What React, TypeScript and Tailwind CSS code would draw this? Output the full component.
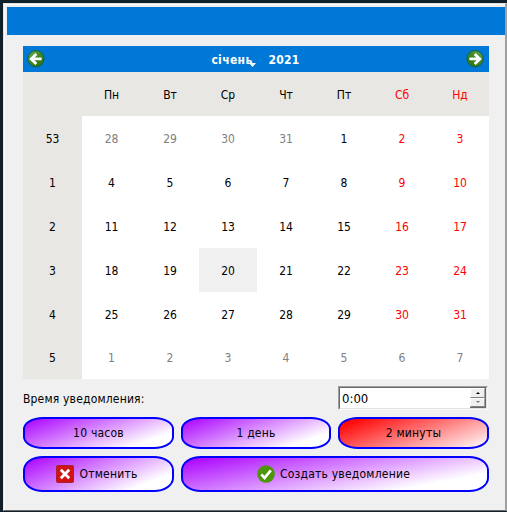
import type { ReactNode } from "react";

const days = ["Пн", "Вт", "Ср", "Чт", "Пт", "Сб", "Нд"];
const weeks = [
  { week: 53, dates: [28, 29, 30, 31, 1, 2, 3] },
  { week: 1, dates: [4, 5, 6, 7, 8, 9, 10] },
  { week: 2, dates: [11, 12, 13, 14, 15, 16, 17] },
  { week: 3, dates: [18, 19, 20, 21, 22, 23, 24] },
  { week: 4, dates: [25, 26, 27, 28, 29, 30, 31] },
  { week: 5, dates: [1, 2, 3, 4, 5, 6, 7] },
];

function dateColor(row: number, col: number, date: number) {
  if ((row === 0 && date > 20) || row === 5) return "text-[#808080]";
  return col > 4 ? "text-[#ff0000]" : "text-black";
}

function NavArrow({ flip = false }: { flip?: boolean }) {
  return (
    <svg width="18" height="18" viewBox="0 0 18 18" className={flip ? "-scale-x-100" : ""}>
      <defs>
        <linearGradient id={flip ? "navNext" : "navPrev"} x1="0" y1="0" x2="0.7" y2="1">
          <stop offset="0" stopColor="#6cb455" />
          <stop offset="0.5" stopColor="#3f8a29" />
          <stop offset="1" stopColor="#2c7414" />
        </linearGradient>
      </defs>
      <circle cx="9" cy="8.7" r="8.1" fill={flip ? "url(#navNext)" : "url(#navPrev)"} stroke="#17603c" strokeWidth="1" />
      <path d="M14.6 8.9H5M9.3 3.9L4.2 8.9l5.1 5" fill="none" stroke="#fff" strokeWidth="2.8" />
    </svg>
  );
}

function PillButton({ children, className }: { children: ReactNode; className: string }) {
  return (
    <button className={`flex items-center justify-center border-2 border-[#0000ff] bg-origin-border tracking-[0.22px] ${className}`}>
      {children}
    </button>
  );
}

export default function App() {
  return (
    <div className="h-[512px] w-[507px] overflow-hidden bg-[#11212b] pt-[3px] pl-[3px] pb-px font-['DejaVu_Sans_Condensed','DejaVu_Sans',sans-serif] text-[12px] leading-[14px] text-black [font-stretch:condensed]">
      <div className="h-[508px] border-t border-l border-r-2 border-b border-t-[#e3e3e3] border-l-[#e3e3e3] border-r-[#a0a0a0] border-b-[#696969] bg-[#f0f0f0]">
        <div className="h-full border-t border-l border-white pt-[2px] pl-[2px]">
          <div className="h-7 bg-[#0078d7]" />
          <main className="mt-[11px] ml-4 w-[466px]">
            <div className="flex h-[26px] items-center justify-between bg-[#0078d7] pr-[5px] pl-1 font-bold text-white">
              <NavArrow />
              <div className="flex gap-[15px] pt-px">
                <span className="relative w-[42px] whitespace-nowrap tracking-[0.35px]">
                  січень
                  <svg className="absolute top-[10px] left-[38px]" width="7" height="5" viewBox="0 0 7 5">
                    <path d="M0 0h7L3.5 4z" fill="white" />
                  </svg>
                </span>
                <span className="tracking-[0.3px]">2021</span>
              </div>
              <NavArrow flip />
            </div>
            <div className="grid h-[307px] grid-cols-[59px_59px_repeat(6,58px)] grid-rows-[repeat(6,44px)_43px] bg-white text-center">
              <div className="bg-[#e8e7e3]" />
              {days.map((day, i) => (
                <div key={day} className={`flex items-center justify-center bg-[#e8e7e3] pt-[2px] ${i > 4 ? "text-[#ff0000]" : ""}`}>{day}</div>
              ))}
              {weeks.map(({ week, dates }, row) => [
                <div key={`week-${week}`} className={`flex items-center justify-center bg-[#e8e7e3] ${row === 5 ? "" : "pt-[2px]"}`}>{week}</div>,
                ...dates.map((date, col) => (
                  <div
                    key={`${week}-${col}`}
                    className={`flex items-center justify-center ${row === 5 ? "" : "pt-[2px]"} ${dateColor(row, col, date)} ${row === 3 && col === 2 ? "bg-[#f0f0f0]" : ""}`}
                  >
                    {date}
                  </div>
                )),
              ])}
            </div>
            <div className="mt-[7px] flex h-6 items-center justify-between">
              <label className="pt-px tracking-[0.18px]">Время уведомления:</label>
              <div className="mr-px h-6 w-[150px] border border-t-[#a0a0a0] border-r-[#f8f8f8] border-b-[#f8f8f8] border-l-[#a0a0a0]">
                <div className="flex h-full border border-t-[#696969] border-r-[#e3e3e3] border-b-[#e3e3e3] border-l-[#696969] bg-white">
                  <span className="flex flex-1 items-center pt-px pl-[2px] text-[13px]">0:00</span>
                  <div className="flex w-4 flex-col border-r border-b border-[#696969] bg-[#f0f0f0]">
                    {["M0 2h4L2 0z", "M0 0h4L2 2z"].map((arrow, i) => (
                      <div key={arrow} className="flex flex-1 items-center justify-center border border-t-white border-r-[#a0a0a0] border-b-[#808080] border-l-white">
                        <svg width="4" height="2" viewBox="0 0 4 2"><path d={arrow} fill={i ? "#777" : "#000"} /></svg>
                      </div>
                    ))}
                  </div>
                </div>
              </div>
            </div>
            <div className="mt-[7px] grid grid-cols-[151px_150px_151px] gap-[7px]">
              <PillButton className="h-8 rounded-[20px/12px] bg-[linear-gradient(160.5deg,#aa00ff_3%,#ffffff_80%)]">10 часов</PillButton>
              <PillButton className="h-8 rounded-[20px/12px] bg-[linear-gradient(160.5deg,#aa00ff_3%,#ffffff_80%)]">1 день</PillButton>
              <PillButton className="h-8 rounded-[20px/12px] bg-[linear-gradient(160.5deg,#ff0000_8%,#ffffff_98%)]">2 минуты</PillButton>
              <PillButton className="h-9 gap-[5px] rounded-[20px/14px] bg-[linear-gradient(158.3deg,#aa00ff_3%,#ffffff_80%)] pr-[3px]">
                <svg width="18" height="18" viewBox="0 0 18 18">
                  <rect x="0.5" y="0.5" width="17" height="17" rx="1" fill="#d31213" stroke="#a92034" />
                  <path d="M4.8 4.8l8.4 8.4M13.2 4.8l-8.4 8.4" stroke="white" strokeWidth="2.8" />
                </svg>
                <span>Отменить</span>
              </PillButton>
              <PillButton className="col-span-2 h-9 gap-[5px] rounded-[20px/14px] bg-[linear-gradient(169deg,#aa00ff_3%,#ffffff_80%)] pr-[3px]">
                <svg width="18" height="18" viewBox="0 0 18 18">
                  <circle cx="9" cy="9" r="8.8" fill="#4d9609" />
                  <path d="M4.3 9.4l3.3 3.5 6.2-7.5" fill="none" stroke="white" strokeWidth="2.7" />
                </svg>
                <span>Создать уведомление</span>
              </PillButton>
            </div>
          </main>
        </div>
      </div>
    </div>
  );
}
